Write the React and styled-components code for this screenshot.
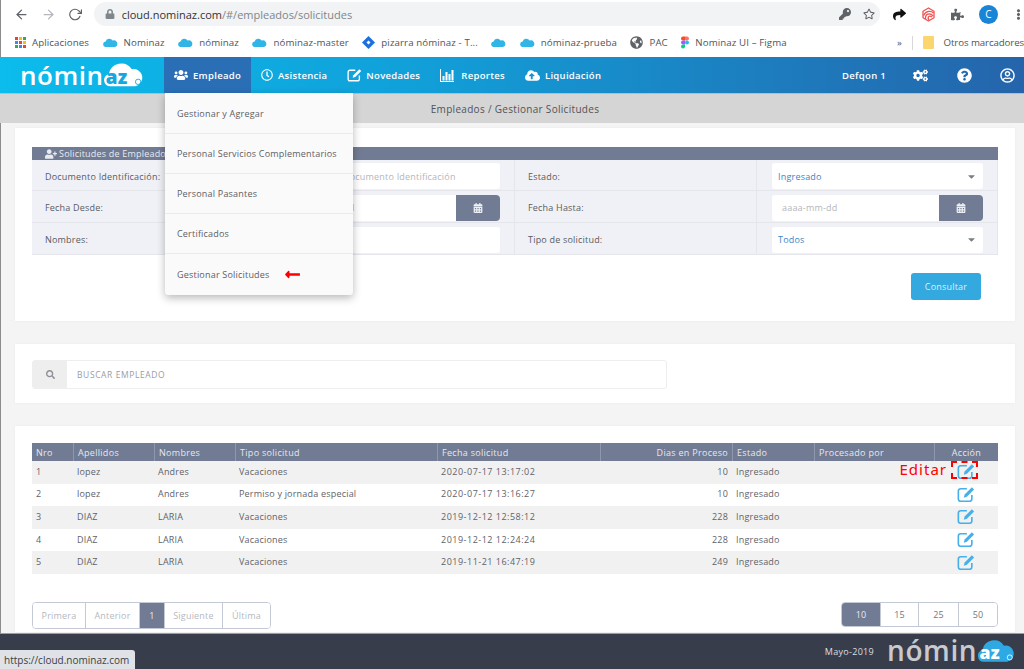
import React from "react";
import styled, { createGlobalStyle } from "styled-components";
import {
  FaUsers,
  FaRegClock,
  FaCloudUploadAlt,
  FaCogs,
  FaQuestionCircle,
  FaRegUserCircle,
  FaUserPlus,
  FaCalendarAlt,
  FaCaretDown,
  FaSearch,
  FaLock,
  FaKey,
  FaRegStar,
  FaPuzzlePiece,
  FaGlobeAmericas,
  FaEllipsisV,
  FaShare,
  FaLongArrowAltLeft,
} from "react-icons/fa";
import { FiArrowLeft, FiArrowRight, FiRotateCw } from "react-icons/fi";

const GlobalStyle = createGlobalStyle`
  html, body { margin: 0; padding: 0; background: #f4f4f4; }
  * { box-sizing: border-box; }
  body { font-family: "Open Sans", "Liberation Sans", sans-serif; }
`;

const Page = styled.div`
  position: relative;
  width: 1024px;
  height: 669px;
  overflow: hidden;
  display: flex;
  flex-direction: column;
  color: #5f6268;
  font-size: 9px;
  letter-spacing: 0.2px;
`;

/* browser chrome */
const Toolbar = styled.div`
  height: 28px;
  display: flex;
  align-items: center;
  background: #fff;
  border-left: 1px solid #8c8c8c;
  padding-left: 13px;
  color: #5f6368;
  font-size: 15px;
`;

const NavGlyph = styled.span`
  width: ${(p) => p.$w || 27}px;
  display: flex;
  color: ${(p) => p.$color || "#5f6368"};
`;

const UrlBar = styled.div`
  width: 792px;
  height: 24px;
  margin-left: 12px;
  padding: 0 5px 0 11px;
  border-radius: 12px;
  background: #f1f3f4;
  display: flex;
  align-items: center;
  gap: 7px;
  font-size: 11px;
  letter-spacing: 0;
  color: #80868b;
  b {
    font-weight: 400;
    color: #303338;
  }
`;

const UrlIcons = styled.span`
  margin-left: auto;
  display: flex;
  align-items: center;
  gap: 12px;
  color: #5f6368;
  font-size: 12px;
`;

const Extensions = styled.div`
  display: flex;
  align-items: center;
  gap: 15px;
  margin-left: 13px;
  font-size: 13px;
`;

const Avatar = styled.span`
  width: 19px;
  height: 19px;
  border-radius: 50%;
  background: #1a85d6;
  color: #fff;
  font-size: 10px;
  display: flex;
  align-items: center;
  justify-content: center;
`;

const Bookmarks = styled.div`
  height: 29px;
  display: flex;
  align-items: center;
  background: #fff;
  border-left: 1px solid #8c8c8c;
  padding-left: 13px;
  font-size: 9.7px;
  letter-spacing: 0.1px;
  color: #50545a;
  white-space: nowrap;
`;

const Bookmark = styled.span`
  display: flex;
  align-items: center;
  gap: 6px;
  margin-right: 13.5px;
`;

const BookmarkEnd = styled.span`
  margin-left: auto;
  display: flex;
  align-items: center;
  gap: 10px;
  letter-spacing: -0.1px;
`;

const Sep = styled.span`
  width: 1px;
  height: 14px;
  background: #d8d8d8;
`;

const Folder = styled.span`
  width: 11px;
  height: 13px;
  border-radius: 1px;
  background: #fbd66e;
`;

const AppsGrid = styled.span`
  display: grid;
  grid-template-columns: repeat(3, 3px);
  gap: 1px;
  margin-left: 1px;
`;

const AppDot = styled.span`
  height: 3px;
  background: ${(p) => p.$c};
`;

/* app nav */
const NavBar = styled.nav`
  height: 36px;
  display: flex;
  align-items: stretch;
  padding-left: 20px;
  background: linear-gradient(90deg, #0bbcec 0%, #11a0d9 40%, #2564ab 100%);
  color: #fff;
  font-size: 9.5px;
  font-weight: 600;
  letter-spacing: 0.3px;
`;

const LogoWrap = styled.div`
  display: flex;
  align-items: flex-end;
  width: ${(p) => p.$w}px;
  padding-bottom: ${(p) => p.$pb}px;
  color: ${(p) => p.$color};
  margin-right: ${(p) => p.$mr || 0}px;
`;

const LogoText = styled.span`
  font-family: "Open Sans", sans-serif;
  font-size: ${(p) => p.$size}px;
  letter-spacing: ${(p) => p.$track}px;
  font-weight: 600;
  line-height: 1;
`;

const NavItem = styled.div`
  display: flex;
  align-items: center;
  gap: ${(p) => p.$gap || 5}px;
  padding: 0 10px;
  background: ${(p) => (p.$active ? "#2a6fb6" : "transparent")};
  white-space: nowrap;
  svg {
    font-size: ${(p) => p.$icon || 14}px;
  }
`;

const NavRight = styled.div`
  margin-left: auto;
  display: flex;
  align-items: center;
  padding-right: 9px;
  svg {
    font-size: 15px;
  }
`;

const NavRightItem = styled.span`
  display: flex;
  margin-left: ${(p) => p.$ml}px;
`;

const Crumb = styled.div`
  height: 30px;
  background: #d5d5d5;
  border-top: 1px solid #b8bcc0;
  display: flex;
  align-items: center;
  justify-content: center;
  padding: 1px 0 0 6px;
  font-size: 10px;
  color: #50535a;
  letter-spacing: 0.3px;
`;

const Main = styled.main`
  flex: 1;
  min-height: 0;
  border-left: 1px solid #8c8c8c;
  padding: 5px 9px 1px 14px;
  background: #f4f4f4;
  display: flex;
  flex-direction: column;
  gap: 23px;
`;

const Card = styled.section`
  background: #fff;
  padding: ${(p) => p.$pad};
  height: ${(p) => p.$h}px;
  box-shadow: 0 0 2px rgba(0, 0, 0, 0.06);
`;

/* filters */
const FilterHead = styled.div`
  height: 13px;
  background: #717b94;
  color: #e8eaf0;
  padding-left: 13px;
  display: flex;
  align-items: center;
  gap: 2px;
  svg {
    font-size: 12px;
  }
`;

const FilterRow = styled.div`
  display: grid;
  grid-template-columns: 242px 241px 242px 241px;
  height: ${(p) => p.$h}px;
  background: #f0f1f6;
  border-bottom: 1px solid #e4e6ec;
`;

const FilterLabel = styled.div`
  display: flex;
  align-items: center;
  padding-left: 13px;
  padding-top: 2px;
  border-right: 1px solid #e4e6ec;
  color: #585b62;
`;

const FilterCell = styled.div`
  display: flex;
  align-items: center;
  padding: 2px 14px 0 15px;
  border-right: 1px solid #e4e6ec;
`;

const Field = styled.div`
  flex: 1;
  height: 26px;
  background: #fff;
  border-radius: 3px;
  display: flex;
  align-items: center;
  padding-left: ${(p) => p.$indent || 6}px;
  color: ${(p) => p.$color || "#b4b6bc"};
`;

const Caret = styled.span`
  margin-left: auto;
  margin-right: 6px;
  display: flex;
  color: #7a7d84;
  font-size: 11px;
`;

const CalBtn = styled.span`
  margin-left: auto;
  width: 44px;
  height: 100%;
  border-radius: 0 4px 4px 0;
  background: #717b94;
  color: #eef0f4;
  font-size: 10px;
  display: flex;
  align-items: center;
  justify-content: center;
`;

const Actions = styled.div`
  display: flex;
  justify-content: flex-end;
  padding: 18px 17px 0 0;
`;

const Consultar = styled.button`
  width: 70px;
  height: 27px;
  border: 0;
  border-radius: 3px;
  background: #33a9e0;
  color: #d9f0fb;
  font: inherit;
  letter-spacing: inherit;
`;

/* search */
const SearchBox = styled.div`
  width: 635px;
  height: 29px;
  display: flex;
  border: 1px solid #eeeeee;
  border-radius: 3px;
  color: #9a9ca2;
  font-size: 8.5px;
`;

const SearchAddon = styled.span`
  width: 34px;
  background: #eeeeee;
  color: #8d9097;
  font-size: 9px;
  display: flex;
  align-items: center;
  justify-content: center;
`;

const SearchText = styled.span`
  display: flex;
  align-items: center;
  padding-left: 10px;
  letter-spacing: 0.6px;
`;

/* grid */
const COLS = "41px 81px 81px 202px 163px 132px 82px 120px 64px";

const TableHead = styled.div`
  display: grid;
  grid-template-columns: ${COLS};
  height: 18px;
  background: #717b94;
  color: #e6e8ee;
`;

const HeadCell = styled.div`
  display: flex;
  align-items: center;
  justify-content: ${(p) => p.$justify || "flex-start"};
  padding: 0 4px;
  letter-spacing: 0.3px;
  border-left: ${(p) => (p.$first ? "0" : "1px solid #8e97ac")};
`;

const Row = styled.div`
  display: grid;
  grid-template-columns: ${COLS};
  height: 22.6px;
  background: ${(p) => (p.$odd ? "#f1f1f1" : "#fff")};
`;

const Cell = styled.div`
  position: relative;
  display: flex;
  align-items: center;
  justify-content: ${(p) => p.$justify || "flex-start"};
  padding: 0 4px 2px 4px;
  white-space: nowrap;
  letter-spacing: ${(p) => p.$track || "inherit"};
`;

const EditNote = styled.span`
  position: absolute;
  right: 51px;
  top: -2px;
  color: #f00;
  font-family: "Noto Sans", sans-serif;
  font-size: 15px;
  letter-spacing: 1px;
`;

const EditMark = styled.span`
  position: absolute;
  left: 17px;
  top: 0;
  width: 27px;
  height: 18px;
  border: 2px dashed #f00;
`;

const Pager = styled.div`
  display: flex;
  justify-content: space-between;
  align-items: flex-start;
  margin-top: 28px;
`;

const PageGroup = styled.div`
  display: flex;
  height: ${(p) => p.$h}px;
  border: 1px solid #c4c9d6;
  border-radius: 4px;
  overflow: hidden;
`;

const PageBtn = styled.span`
  width: ${(p) => p.$w}px;
  display: flex;
  align-items: center;
  justify-content: center;
  border-left: ${(p) => (p.$first ? "0" : "1px solid #c4c9d6")};
  background: ${(p) => (p.$active ? "#717b94" : "#fff")};
  color: ${(p) => (p.$active ? "#e8eaf0" : p.$muted ? "#b6b8c0" : "#74777e")};
`;

const Footer = styled.footer`
  height: 36px;
  background: #383d4b;
  border-top: 1px solid #9a9da3;
  display: flex;
  align-items: center;
  justify-content: flex-end;
  padding-right: 9px;
  color: #dcdde0;
  font-size: 9px;
  letter-spacing: 0.3px;
`;

const FooterDate = styled.span`
  margin-right: 13px;
`;

/* overlays */
const Menu = styled.div`
  position: absolute;
  left: 165px;
  top: 93px;
  width: 188px;
  height: 202px;
  background: #fafafa;
  border-radius: 0 0 3px 3px;
  box-shadow: 0 3px 9px rgba(0, 0, 0, 0.28);
`;

const MenuItem = styled.div`
  height: ${(p) => p.$h || 40}px;
  display: flex;
  align-items: center;
  gap: 14px;
  padding-left: 12px;
  color: #5d6066;
  border-top: ${(p) => (p.$first ? "0" : "1px solid #ebebeb")};
`;

const RedArrow = styled.span`
  display: flex;
  color: #f00;
  font-size: 17px;
`;

const StatusTip = styled.div`
  position: absolute;
  left: 0;
  bottom: 0;
  width: 135px;
  height: 19px;
  padding-left: 4px;
  background: #dfe3e8;
  border-radius: 0 3px 0 0;
  color: #3c4043;
  font-size: 10px;
  letter-spacing: 0;
  display: flex;
  align-items: center;
`;

const CloudMark = ({ w = 15, fill = "#31b5e6" }) => (
  <svg width={w} height={w * 0.6} viewBox="0 0 25 15">
    <path
      d="M5 15a4.5 4.5 0 0 1-.6-9A6.5 6.5 0 0 1 16 4.2 5.5 5.5 0 0 1 20 15z"
      fill={fill}
    />
  </svg>
);

const ChartIcon = () => (
  <svg width="14" height="13" viewBox="0 0 14 13" fill="#fff">
    <rect x="0" y="0" width="1" height="13" />
    <rect x="0" y="12" width="14" height="1" />
    <rect x="2.5" y="7" width="2" height="4.5" />
    <rect x="5.5" y="3" width="2" height="8.5" />
    <rect x="8.5" y="5" width="2" height="6.5" />
    <rect x="11.5" y="1" width="2" height="10.5" />
  </svg>
);

// pencil-square: open rounded box with a solid pencil over its top right corner
const PencilSquare = ({ w = 18, color = "#45b0ea" }) => (
  <svg width={w} height={w * 0.9} viewBox="0 0 20 18" fill="none">
    <path
      d="M11 3H4a2.5 2.5 0 0 0-2.5 2.5v9A2.5 2.5 0 0 0 4 17h10a2.5 2.5 0 0 0 2.5-2.5V10"
      stroke={color}
      strokeWidth="1.8"
    />
    <path d="M16.5 1.5 19 4 11 12l-3.5 1 1-3.5z" fill={color} />
  </svg>
);

const SpiralIcon = () => (
  <svg width="15" height="15" viewBox="0 0 15 15" fill="none" stroke="#ef5350" strokeWidth="1.3">
    <path d="M7.5 1 13 4.2v6.600L7.5 14 2 10.800V4.2z" strokeLinejoin="round" />
    <path d="M2.5 8.5C5 3.5 10 3.5 12.5 6M4.5 12C4 7 9 5 12 9M8 13c-2-3 0-5 3-3" />
  </svg>
);

const FigmaIcon = () => (
  <svg width="8" height="13" viewBox="0 0 8 12">
    <path d="M4 0H2a2 2 0 0 0 0 4h2z" fill="#f24e1e" />
    <path d="M4 0h2a2 2 0 0 1 0 4H4z" fill="#ff7262" />
    <path d="M4 4H2a2 2 0 0 0 0 4h2z" fill="#a259ff" />
    <circle cx="6" cy="6" r="2" fill="#1abcfe" />
    <path d="M4 8H2a2 2 0 1 0 2 2z" fill="#0acf83" />
  </svg>
);

const DiamondIcon = () => (
  <svg width="13" height="13" viewBox="0 0 13 13">
    <path d="M6.5 0 13 6.5 6.5 13 0 6.5z" fill="#1b6fe0" />
    <path d="M6.5 4.5 8.5 6.5 6.5 8.5 4.5 6.5z" fill="#fff" />
  </svg>
);

// wordmark: "nómin" as text, with the cloud holding "az" beside it
const Logo = ({ color, cloud, ink, size, track, w, cloudW, mr, pb }) => (
  <LogoWrap $color={color} $mr={mr} $w={w} $pb={pb}>
    <LogoText $size={size} $track={track}>nómin</LogoText>
    <svg width={cloudW} height={cloudW * 0.62} viewBox="0 0 45 28">
      <path
        d="M8 27a7 7 0 0 1-1.5-13.8A14 14 0 0 1 32 8a9.5 9.5 0 0 1 4 19z"
        fill={cloud}
      />
      <text x="3" y="24" fontFamily="Open Sans, sans-serif" fontWeight="800" fontSize="21" fill={ink}>
        az
      </text>
      <circle cx="39" cy="22" r="3" fill="none" stroke={ink} strokeWidth="1" />
    </svg>
  </LogoWrap>
);

const filterRows = [
  { h: 31, left: "Documento Identificación:", right: "Estado:" },
  { h: 32, left: "Fecha Desde:", right: "Fecha Hasta:" },
  { h: 32, left: "Nombres:", right: "Tipo de solicitud:" },
];

const rows = [
  ["1", "lopez", "Andres", "Vacaciones", "2020-07-17 13:17:02", "10"],
  ["2", "lopez", "Andres", "Permiso y jornada especial", "2020-07-17 13:16:27", "10"],
  ["3", "DIAZ", "LARIA", "Vacaciones", "2019-12-12 12:58:12", "228"],
  ["4", "DIAZ", "LARIA", "Vacaciones", "2019-12-12 12:24:24", "228"],
  ["5", "DIAZ", "LARIA", "Vacaciones", "2019-11-21 16:47:19", "249"],
];

const heads = [
  ["Nro"],
  ["Apellidos"],
  ["Nombres"],
  ["Tipo solicitud"],
  ["Fecha solicitud"],
  ["Dias en Proceso", "flex-end"],
  ["Estado"],
  ["Procesado por"],
  ["Acción", "center"],
];

const appColors = ["#ea4335", "#fbbc05", "#34a853", "#4285f4", "#ea4335", "#fbbc05", "#34a853", "#4285f4", "#ea4335"];

const App = () => (
  <Page>
    <GlobalStyle />
    <Toolbar>
      <NavGlyph><FiArrowLeft /></NavGlyph>
      <NavGlyph $color="#b4b7bb"><FiArrowRight /></NavGlyph>
      <NavGlyph $w={14}><FiRotateCw /></NavGlyph>
      <UrlBar>
        <FaLock size={10} />
        <span><b>cloud.nominaz.com</b>/#/empleados/solicitudes</span>
        <UrlIcons>
          <FaKey />
          <FaRegStar />
        </UrlIcons>
      </UrlBar>
      <Extensions>
        <FaShare color="#111" />
        <SpiralIcon />
        <FaPuzzlePiece color="#5f6368" />
        <Avatar>C</Avatar>
        <FaEllipsisV size={11} color="#5f6368" />
      </Extensions>
    </Toolbar>
    <Bookmarks>
      <Bookmark>
        <AppsGrid>
          {appColors.map((c, i) => (
            <AppDot key={i} $c={c} />
          ))}
        </AppsGrid>
        Aplicaciones
      </Bookmark>
      <Bookmark><CloudMark />Nominaz</Bookmark>
      <Bookmark><CloudMark />nóminaz</Bookmark>
      <Bookmark><CloudMark />nóminaz-master</Bookmark>
      <Bookmark><DiamondIcon />pizarra nóminaz - T...</Bookmark>
      <Bookmark><CloudMark /></Bookmark>
      <Bookmark><CloudMark />nóminaz-prueba</Bookmark>
      <Bookmark><FaGlobeAmericas size={13} color="#5f6368" />PAC</Bookmark>
      <Bookmark><FigmaIcon />Nominaz UI – Figma</Bookmark>
      <BookmarkEnd>
        »
        <Sep />
        <Folder />
        Otros marcadores
      </BookmarkEnd>
    </Bookmarks>
    <NavBar>
      <Logo color="#fff" cloud="#fff" ink="#13a9e0" size={26} track={0.5} w={124} cloudW={44} mr={20} pb={5} />
      <NavItem $active><FaUsers />Empleado</NavItem>
      <NavItem $icon={12}><FaRegClock />Asistencia</NavItem>
      <NavItem $gap={4}><PencilSquare w={15} color="#fff" />Novedades</NavItem>
      <NavItem $gap={7}><ChartIcon />Reportes</NavItem>
      <NavItem $icon={15}><FaCloudUploadAlt />Liquidación</NavItem>
      <NavRight>
        <span>Defqon 1</span>
        <NavRightItem $ml={27}><FaCogs /></NavRightItem>
        <NavRightItem $ml={29}><FaQuestionCircle /></NavRightItem>
        <NavRightItem $ml={28}><FaRegUserCircle /></NavRightItem>
      </NavRight>
    </NavBar>
    <Crumb>Empleados / Gestionar Solicitudes</Crumb>
    <Main>
      <Card $h={193} $pad="19px 17px 0">
        <FilterHead><FaUserPlus />Solicitudes de Empleados</FilterHead>
        {filterRows.map((r, i) => (
          <FilterRow key={r.left} $h={r.h}>
            <FilterLabel>{r.left}</FilterLabel>
            <FilterCell>
              {i === 0 && <Field $indent={54}>Documento Identificación</Field>}
              {i === 1 && (
                <Field $indent={10}>
                  aaaa-mm-dd
                  <CalBtn><FaCalendarAlt /></CalBtn>
                </Field>
              )}
              {i === 2 && <Field />}
            </FilterCell>
            <FilterLabel>{r.right}</FilterLabel>
            <FilterCell>
              {i === 0 && (
                <Field $color="#3a86c8">
                  Ingresado
                  <Caret><FaCaretDown /></Caret>
                </Field>
              )}
              {i === 1 && (
                <Field $indent={10}>
                  aaaa-mm-dd
                  <CalBtn><FaCalendarAlt /></CalBtn>
                </Field>
              )}
              {i === 2 && (
                <Field $color="#3a86c8">
                  Todos
                  <Caret><FaCaretDown /></Caret>
                </Field>
              )}
            </FilterCell>
          </FilterRow>
        ))}
        <Actions>
          <Consultar>Consultar</Consultar>
        </Actions>
      </Card>
      <Card $h={59} $pad="16px 17px 0">
        <SearchBox>
          <SearchAddon><FaSearch /></SearchAddon>
          <SearchText>BUSCAR EMPLEADO</SearchText>
        </SearchBox>
      </Card>
      <Card $h={206} $pad="17px 17px 0">
        <TableHead>
          {heads.map(([label, justify], i) => (
            <HeadCell key={label} $first={i === 0} $justify={justify}>{label}</HeadCell>
          ))}
        </TableHead>
        {rows.map((r, i) => (
          <Row key={r[0]} $odd={i % 2 === 0}>
            <Cell>{r[0]}</Cell>
            <Cell>{r[1]}</Cell>
            <Cell>{r[2]}</Cell>
            <Cell>{r[3]}</Cell>
            <Cell $track="0.5px">{r[4]}</Cell>
            <Cell $justify="flex-end">{r[5]}</Cell>
            <Cell>Ingresado</Cell>
            <Cell />
            <Cell $justify="center">
              {i === 0 && <EditNote>Editar</EditNote>}
              {i === 0 && <EditMark />}
              <PencilSquare />
            </Cell>
          </Row>
        ))}
        <Pager>
          <PageGroup $h={27}>
            <PageBtn $first $muted $w={52}>Primera</PageBtn>
            <PageBtn $muted $w={54}>Anterior</PageBtn>
            <PageBtn $active $w={25}>1</PageBtn>
            <PageBtn $muted $w={58}>Siguiente</PageBtn>
            <PageBtn $muted $w={48}>Última</PageBtn>
          </PageGroup>
          <PageGroup $h={25}>
            <PageBtn $first $active $w={38}>10</PageBtn>
            <PageBtn $w={38}>15</PageBtn>
            <PageBtn $w={40}>25</PageBtn>
            <PageBtn $w={39}>50</PageBtn>
          </PageGroup>
        </Pager>
      </Card>
    </Main>
    <Footer>
      <FooterDate>Mayo-2019</FooterDate>
      <Logo color="#c9cacd" cloud="#2fa9e4" ink="#fff" size={28} track={0.6} w={128} cloudW={41} pb={4} />
    </Footer>
    <Menu>
      <MenuItem $first>Gestionar y Agregar</MenuItem>
      <MenuItem>Personal Servicios Complementarios</MenuItem>
      <MenuItem>Personal Pasantes</MenuItem>
      <MenuItem>Certificados</MenuItem>
      <MenuItem $h={41}>
        Gestionar Solicitudes
        <RedArrow><FaLongArrowAltLeft /></RedArrow>
      </MenuItem>
    </Menu>
    <StatusTip>https://cloud.nominaz.com</StatusTip>
  </Page>
);

export default App;
